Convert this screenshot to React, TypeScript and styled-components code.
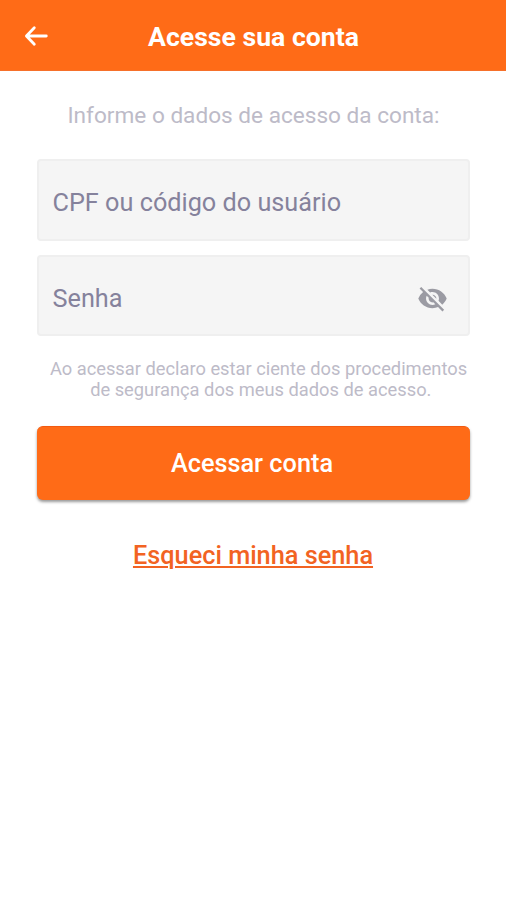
import React from "react";
import styled, { createGlobalStyle } from "styled-components";
import { MdVisibilityOff } from "react-icons/md";

const GlobalStyle = createGlobalStyle`
  *, *::before, *::after { box-sizing: border-box; }
  body { margin: 0; background: #fff; font-family: Roboto, "Liberation Sans", sans-serif; }
`;

const Screen = styled.div`
  display: flex;
  flex-direction: column;
  width: 100%;
  max-width: 506px;
  min-height: 100vh;
  background: #fff;
`;

const Header = styled.header`
  display: grid;
  grid-template-columns: 48px 1fr 48px;
  align-items: center;
  height: 71px;
  padding-bottom: 1px;
  background: #ff6b17;
  border-bottom: 1px solid #f6702a;
`;

const BackButton = styled.button`
  display: flex;
  width: 24px;
  height: 22px;
  margin: 3px 0 0 24px;
  padding: 0;
  border: 0;
  background: none;
  color: #fff;
`;

const Title = styled.h1`
  margin: 4px 0 0 1px;
  font-size: 26.6px;
  font-weight: 700;
  line-height: 30px;
  text-align: center;
  white-space: nowrap;
  color: #fff;
`;

const Form = styled.main`
  display: flex;
  flex-direction: column;
  padding: 0 36px 0 37px;
`;

const Intro = styled.p`
  margin: 30px 0 29px;
  font-size: 22.6px;
  line-height: 29px;
  text-align: center;
  white-space: nowrap;
  color: #bdbbc8;
`;

const Field = styled.label<{ $height: number }>`
  display: flex;
  align-items: center;
  justify-content: space-between;
  height: ${(p) => p.$height}px;
  margin-bottom: 14px;
  padding: 6px 20px 0 13.5px;
  border: 2px solid #efefef;
  border-radius: 4px;
  background: #f5f5f5;
  font-size: 25.25px;
  line-height: 32px;
  color: #85829c;
`;

const EyeButton = styled.button`
  display: flex;
  padding: 0;
  border: 0;
  background: none;
  color: #9b9ba3;
`;

const Notice = styled.p`
  margin: 8px -10px 26px 0;
  font-size: 18.3px;
  line-height: 21px;
  text-align: center;
  white-space: nowrap;
  color: #bdbbc8;
`;

const Submit = styled.button`
  height: 74px;
  padding: 0 3px 0 0;
  border: 0;
  border-top: 1px solid #f35a10;
  border-radius: 6px;
  background: #ff6b17;
  box-shadow: 0 2px 3px rgba(0, 0, 0, 0.4);
  font: 500 25.3px/30px Roboto, "Liberation Sans", sans-serif;
  color: #fff;
`;

const Forgot = styled.a`
  align-self: center;
  margin: 41px 1px 0 0;
  font-size: 25.3px;
  font-weight: 500;
  line-height: 30px;
  white-space: nowrap;
  color: #f26322;
  text-decoration: underline;
  text-decoration-thickness: 1.5px;
  text-underline-offset: 2px;
`;

export default function App() {
  return (
    <Screen>
      <GlobalStyle />
      <Header>
        <BackButton aria-label="Voltar">
          <svg width="24" height="22" viewBox="0 0 24 22" fill="none" stroke="currentColor" strokeWidth="2.8" strokeLinecap="round" strokeLinejoin="round">
            <path d="M22.3 11H2.7M10.3 2.8L2.4 11l7.9 8.2" />
          </svg>
        </BackButton>
        <Title>Acesse sua conta</Title>
      </Header>
      <Form>
        <Intro>Informe o dados de acesso da conta:</Intro>
        <Field $height={82}>
          <span>CPF ou código do usuário</span>
        </Field>
        <Field $height={81}>
          <span>Senha</span>
          <EyeButton aria-label="Mostrar senha">
            <MdVisibilityOff size={31} />
          </EyeButton>
        </Field>
        <Notice>
          Ao acessar declaro estar ciente dos procedimentos
          <br />
          &nbsp;de segurança dos meus dados de acesso.
        </Notice>
        <Submit>Acessar conta</Submit>
        <Forgot>Esqueci minha senha</Forgot>
      </Form>
    </Screen>
  );
}
